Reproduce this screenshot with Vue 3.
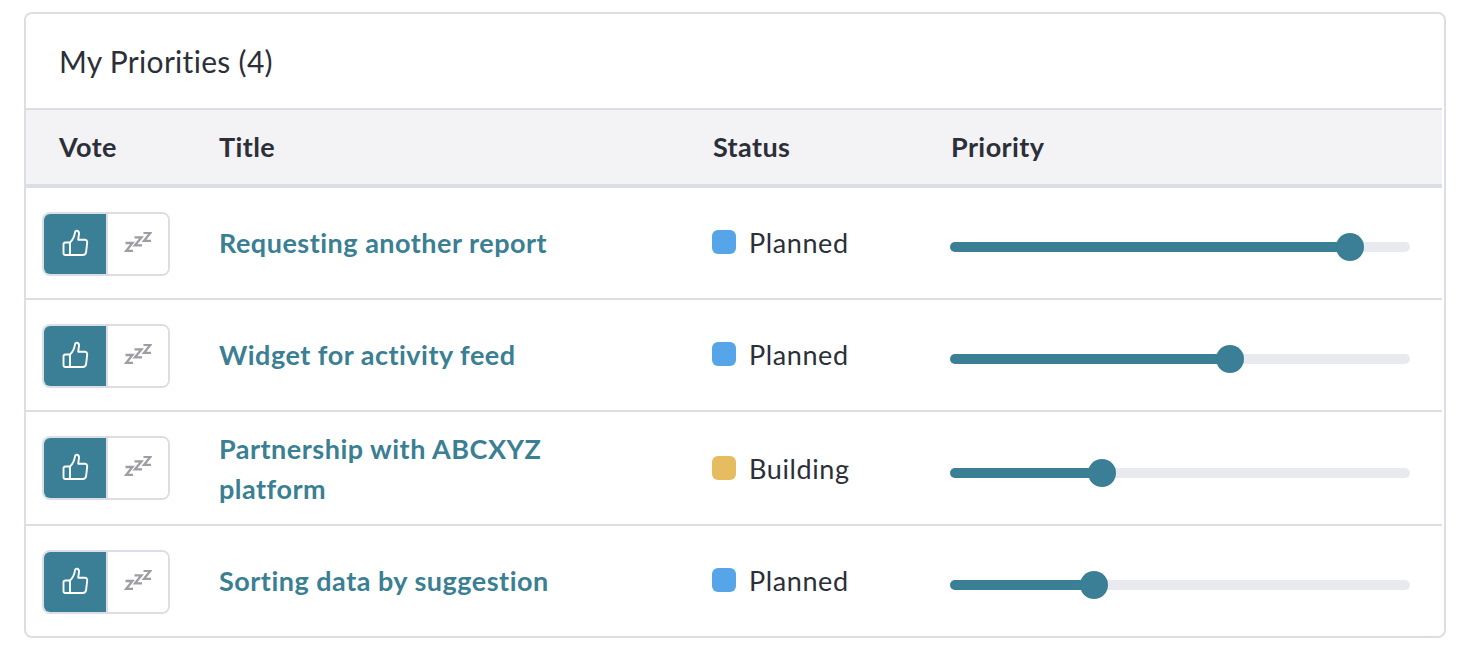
<script setup>
const rows = [
  { title: 'Requesting another report', status: 'Planned', pos: 400 },
  { title: 'Widget for activity feed', status: 'Planned', pos: 280 },
  { title: 'Partnership with ABCXYZ platform', status: 'Building', pos: 152, tall: true },
  { title: 'Sorting data by suggestion', status: 'Planned', pos: 144 },
]
const pct = (p) => (p / 460) * 100 + '%'
</script>

<template>
  <div class="page">
    <section class="card">
      <h2 class="card-title">My Priorities (4)</h2>
      <div class="head grid">
        <div class="h-vote">Vote</div>
        <div>Title</div>
        <div class="h-status">Status</div>
        <div class="h-priority">Priority</div>
      </div>
      <div v-for="r in rows" :key="r.title" class="row grid" :class="{ tall: r.tall }">
        <div class="vote">
          <div class="toggle">
            <button class="btn on" aria-label="Vote">
              <svg width="28" height="28" viewBox="0 0 28 28" fill="none" stroke="#fff" stroke-width="1.9" stroke-linejoin="round" stroke-linecap="round">
                <path d="M9 13.5H4.2A1.7 1.7 0 0 0 2.5 15.2v9.1A1.7 1.7 0 0 0 4.2 26H9" />
                <path d="M9 26V13.5c2.8-2.6 4.4-5.8 5-10.1.2-1.4 1.2-1.9 2.1-1.7 1.4.3 2 1.5 1.9 3.1l-.8 5.9h6.6c1.6 0 2.6 1.2 2.4 2.8l-1.1 9.6c-.3 1.9-1.5 2.9-3.3 2.9Z" />
              </svg>
            </button>
            <button class="btn off" aria-label="Snooze">
              <svg width="28" height="20" viewBox="0 0 28 20" fill="none" stroke="#9c9da5" stroke-width="2.3" stroke-linejoin="miter">
                <path d="M1.5 11H8.5L2 19H9" />
                <path d="M10.5 5.3H17.5L11 13.3H18" />
                <path d="M19.5 0.8H26.5L20 8.8H27" />
              </svg>
            </button>
          </div>
        </div>
        <a class="title" href="#" @click.prevent>{{ r.title }}</a>
        <div class="status">
          <span class="dot" :class="r.status.toLowerCase()"></span>
          <span>{{ r.status }}</span>
        </div>
        <div class="slider-cell">
          <div class="track">
            <div class="fill" :style="{ width: pct(r.pos) }"></div>
            <div class="thumb" :style="{ left: pct(r.pos) }"></div>
          </div>
        </div>
      </div>
    </section>
  </div>
</template>

<style>
html, body { margin: 0; background: #fff; }
</style>

<style scoped>
.page {
  padding: 12px 16px 14px 24px;
  font-family: Lato, "Open Sans", "Liberation Sans", sans-serif;
  color: #2c2f38;
}
.card {
  width: 1422px;
  box-sizing: border-box;
  border: 2px solid #dcdee5;
  border-radius: 8px;
  background: #fff;
  overflow: hidden;
}
.card-title {
  margin: 0;
  height: 94px;
  box-sizing: border-box;
  padding-left: 33px;
  display: flex;
  align-items: center;
  font-size: 30px;
  font-weight: 400;
  letter-spacing: 0.3px;
}
.grid {
  display: grid;
  grid-template-columns: 193px 493px 238px 1fr;
  width: 1416px;
}
.head {
  height: 80px;
  box-sizing: border-box;
  padding-bottom: 2px;
  align-items: center;
  background: #f3f3f6;
  border-top: 2px solid #dcdee5;
  border-bottom: 4px solid #dcdee5;
  font-size: 27px;
  font-weight: 700;
  letter-spacing: 0.4px;
}
.h-vote { padding-left: 33px; }
.h-status { padding-left: 1px; }
.h-priority { padding-left: 1px; }
.row {
  min-height: 110px;
  align-items: center;
  border-top: 2px solid #dcdee5;
}
.head + .row { border-top: 0; }
.vote { align-self: start; padding: 24px 0 22px 16px; }
.toggle {
  display: flex;
  width: 128px;
  height: 64px;
  box-sizing: border-box;
  border: 2px solid #dcdee5;
  border-radius: 8px;
  overflow: hidden;
}
.btn {
  border: 0;
  padding: 0;
  margin: 0;
  display: flex;
  align-items: center;
  justify-content: center;
  background: #fff;
}
.on { width: 62px; background: #3a7f96; padding-bottom: 3px; }
.off { flex: 1; border-left: 2px solid #dcdee5; padding-bottom: 4px; }
.title {
  color: #3a7f93;
  font-size: 27px;
  font-weight: 700;
  line-height: 40px;
  text-decoration: none;
  padding: 16px 100px 16px 0;
  letter-spacing: 0.5px;
}
.tall .title { padding-top: 17px; padding-bottom: 15px; }
.status {
  display: flex;
  align-items: center;
  gap: 13px;
  padding-bottom: 2px;
  font-size: 27px;
  letter-spacing: 0.6px;
}
.tall .status { padding-bottom: 0; }
.dot { width: 24px; height: 24px; border-radius: 6px; }
.planned { background: #55a5e8; }
.building { background: #e6bc60; }
.slider-cell { padding: 8px 32px 0 0; }
.tall .slider-cell { padding-top: 10px; }
.track {
  position: relative;
  height: 10px;
  border-radius: 5px;
  background: #e9eaf0;
}
.fill {
  height: 100%;
  border-radius: 5px;
  background: #3a7f96;
}
.thumb {
  position: absolute;
  top: -9px;
  width: 28px;
  height: 28px;
  margin-left: -14px;
  border-radius: 50%;
  background: #3a7f96;
}
</style>
